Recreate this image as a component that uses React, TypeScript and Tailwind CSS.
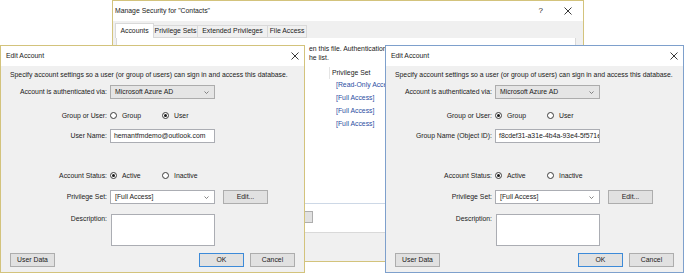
import React from "react";

const CloseX = ({ size = 8 }: { size?: number }) => (
  <svg width={size} height={size} viewBox="0 0 8 8">
    <path d="M0.5 0.5 L7.5 7.5 M7.5 0.5 L0.5 7.5" stroke="#222" strokeWidth="0.9" />
  </svg>
);

const Chevron = () => (
  <svg width="5" height="3" viewBox="0 0 5 3">
    <path d="M0.5 0.5 L2.5 2.5 L4.5 0.5" fill="none" stroke="#666" strokeWidth="0.8" />
  </svg>
);

const Radio = ({ checked, label }: { checked?: boolean; label: string }) => (
  <span className="flex items-center gap-[5px]">
    <span className="flex h-[7px] w-[7px] items-center justify-center rounded-full border border-[#3c3c3c] bg-white">
      {checked && <span className="h-[3px] w-[3px] rounded-full bg-[#1a1a1a]" />}
    </span>
    {label}
  </span>
);

const Combo = ({ value, gray }: { value: string; gray?: boolean }) => (
  <div
    className={`flex h-[14px] w-[105px] items-center justify-between border pl-[4px] pr-[5px] ${
      gray ? "border-[#acacac] bg-[#e5e5e5]" : "border-[#abadb3] bg-white"
    }`}
  >
    <span>{value}</span>
    <Chevron />
  </div>
);

const Btn = ({ children, primary, className = "" }: { children: React.ReactNode; primary?: boolean; className?: string }) => (
  <div
    className={`flex h-[14px] w-[45px] items-center justify-center border bg-[#e1e1e1] ${
      primary ? "border-[#3c8ad8]" : "border-[#adadad]"
    } ${className}`}
  >
    {children}
  </div>
);

const Row = ({ label, className = "", children }: { label: string; className?: string; children: React.ReactNode }) => (
  <div className={`flex items-center ${className}`}>
    <span className="w-[97px] shrink-0 whitespace-nowrap text-right">{label}</span>
    <div className="ml-[3px] flex items-center">{children}</div>
  </div>
);

interface EditProps {
  className: string;
  group?: boolean;
  nameLabel: string;
  nameValue: string;
}

const EditAccount = ({ className, group, nameLabel, nameValue }: EditProps) => (
  <div className={`absolute flex flex-col border bg-[#f0f0f0] ${className}`}>
    <div className="flex h-[20px] shrink-0 items-center justify-between bg-white pl-[5px] pr-[5px]">
      <span>Edit Account</span>
      <CloseX />
    </div>
    <div className="flex flex-1 flex-col px-[9px]">
      <p className="mt-[4px] whitespace-nowrap leading-[10px]">
        Specify account settings so a user (or group of users) can sign in and access this database.
      </p>
      <Row label="Account is authenticated via:" className="mt-[5px] h-[14px]">
        <Combo value="Microsoft Azure AD" gray />
      </Row>
      <Row label="Group or User:" className="mt-[11px] h-[12px]">
        <div className="w-[52px]">
          <Radio label="Group" checked={group} />
        </div>
        <Radio label="User" checked={!group} />
      </Row>
      <Row label={nameLabel} className="mt-[7px] h-[14px]">
        <div className="flex h-[14px] w-[105px] items-center overflow-hidden whitespace-nowrap border border-[#abadb3] bg-white pl-[3px]">
          {nameValue}
        </div>
      </Row>
      <Row label="Account Status:" className="mt-[27px] h-[12px]">
        <div className="w-[52px]">
          <Radio label="Active" checked />
        </div>
        <Radio label="Inactive" />
      </Row>
      <Row label="Privilege Set:" className="mt-[8px] h-[14px]">
        <Combo value="[Full Access]" />
        <Btn className="ml-[8px]">Edit...</Btn>
      </Row>
      <div className="mt-[10px] flex">
        <span className="w-[97px] shrink-0 text-right leading-[10px]">Description:</span>
        <div className="ml-[4px] h-[32px] w-[104px] border border-[#abadb3] bg-white" />
      </div>
      <div className="mb-[5px] mt-auto flex items-center">
        <Btn>User Data</Btn>
        <div className="flex-1" />
        <Btn primary>OK</Btn>
        <Btn className="ml-[6px]">Cancel</Btn>
      </div>
    </div>
  </div>
);

const ManageSecurity = () => (
  <div className="absolute left-[112px] top-0 flex h-[262px] w-[472px] flex-col border border-[#d3c37c] bg-[#f0f0f0]">
    <div className="flex h-[20px] shrink-0 items-center justify-between bg-white pl-[2px] pr-[11px]">
      <span>Manage Security for "Contacts"</span>
      <div className="flex items-center gap-[21px]">
        <span className="text-[8px]">?</span>
        <CloseX />
      </div>
    </div>
    <div className="mt-[2px] flex items-end whitespace-nowrap pl-[2px]">
      <div className="flex h-[15px] w-[39px] items-center justify-center border border-b-0 border-[#d9d9d9] bg-white">Accounts</div>
      <div className="flex h-[13px] w-[44px] items-center justify-center border border-l-0 border-[#d9d9d9]">Privilege Sets</div>
      <div className="flex h-[13px] w-[70px] items-center justify-center border border-l-0 border-[#d9d9d9]">Extended Privileges</div>
      <div className="flex h-[13px] w-[39px] items-center justify-center border border-l-0 border-[#d9d9d9]">File Access</div>
    </div>
    <div className="ml-[3px] mr-[7px] flex h-[195px] flex-col border border-t-0 border-[#d9d9d9] bg-white px-[4px] pt-[7px]">
      <div className="flex whitespace-nowrap leading-[8.5px]">
        <span className="w-[188px] shrink-0 overflow-hidden">You can create accounts for people who can op</span>
        <span>en this file. Authentication is performed in the order that accounts appear in</span>
      </div>
      <div className="flex whitespace-nowrap leading-[8.5px]">
        <span className="w-[188px] shrink-0 overflow-hidden">the list, starting at the top of t</span>
        <span>he list.</span>
      </div>
      <div className="mt-[5px] flex h-[137px] flex-col border-b border-[#cdd8e6]">
        <div className="flex h-[12px] shrink-0 items-center">
          <span className="w-[208px] shrink-0" />
          <span className="h-full w-px bg-[#e5e5e5]" />
          <span className="pl-[2px]">Privilege Set</span>
        </div>
        {["[Read-Only Access]", "[Full Access]", "[Full Access]", "[Full Access]"].map((p, i) => (
          <div key={i} className="flex h-[13px] shrink-0 items-center">
            <span className="w-[209px] shrink-0" />
            <span className="pl-[6px] text-[#2b4ea2]">{p}</span>
          </div>
        ))}
      </div>
      <div className="mt-[7px] flex gap-[4px]">
        {["New...", "Edit...", "Duplicate", "Delete"].map((b) => (
          <div key={b} className="flex h-[12px] w-[45px] items-center justify-center border border-[#adadad] bg-[#e1e1e1]">
            {b}
          </div>
        ))}
      </div>
    </div>
  </div>
);

export default function App() {
  return (
    <div className="relative h-[273px] w-[686px] overflow-hidden bg-white font-['Liberation_Sans',Arial,sans-serif] text-[6.85px] text-[#1a1a1a]">
      <ManageSecurity />
      <EditAccount
        className="left-0 top-[45px] h-[228px] w-[305px] border-[#d3c37c]"
        nameLabel="User Name:"
        nameValue="hemantfmdemo@outlook.com"
      />
      <EditAccount
        className="left-[385px] top-[45px] h-[228px] w-[299px] border-[#7ea0cc]"
        group
        nameLabel="Group Name (Object ID):"
        nameValue="f8cdef31-a31e-4b4a-93e4-5f571e5f9c2d"
      />
    </div>
  );
}
